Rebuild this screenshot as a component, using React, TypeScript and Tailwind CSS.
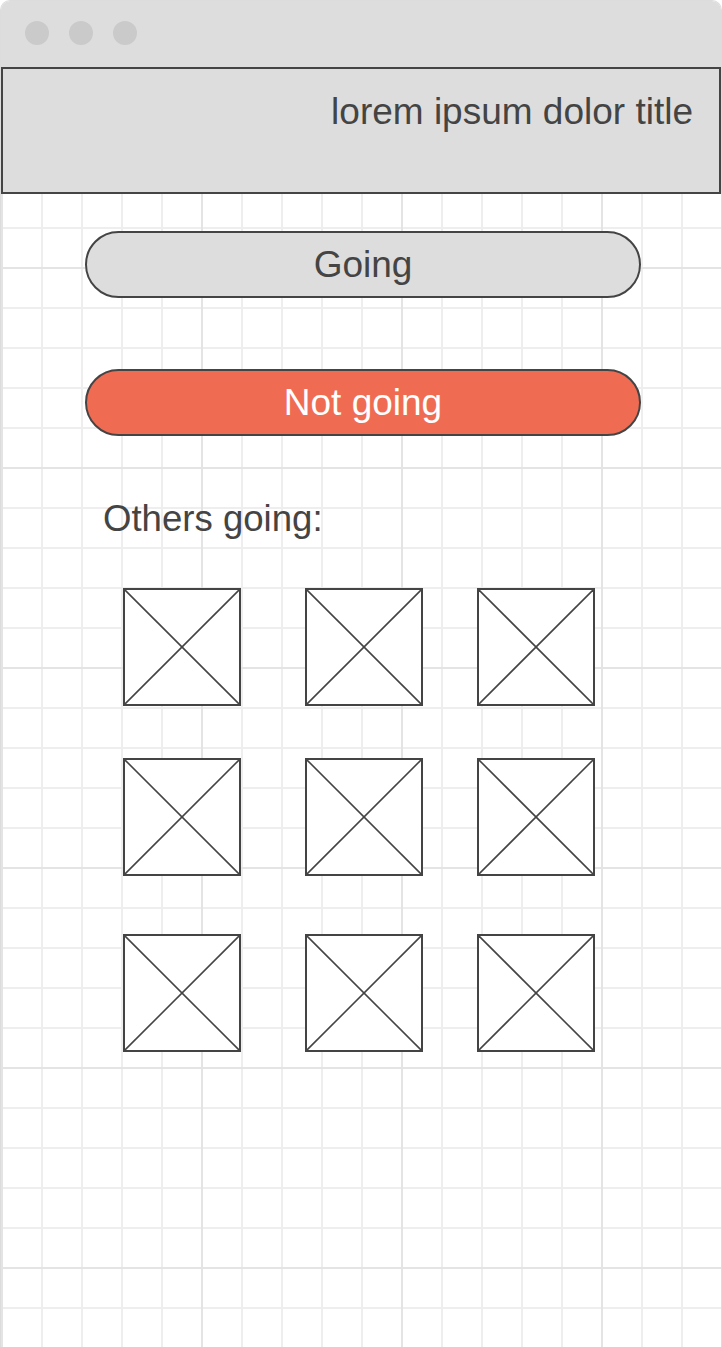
import React from "react";

const rows = [
  { top: "mt-[49px]" },
  { top: "mt-[52px]" },
  { top: "mt-[58px]" },
];

function Placeholder({ className }: { className: string }) {
  return (
    <div className={`h-[118px] w-[118px] shrink-0 border-2 border-[#444444] bg-white ${className}`}>
      <svg width="114" height="114" viewBox="0 0 114 114" className="block">
        <line x1="0" y1="0" x2="114" y2="114" stroke="#444444" strokeWidth="1.6" />
        <line x1="114" y1="0" x2="0" y2="114" stroke="#444444" strokeWidth="1.6" />
      </svg>
    </div>
  );
}

export default function App() {
  return (
    <div className="h-[1347px] w-[722px] overflow-hidden bg-white font-['Liberation_Sans',Arial,sans-serif] text-[#444444]">
      <div className="flex h-full flex-col rounded-t-[10px] border border-b-0 border-[#dcdcdc]">
        {/* window bar */}
        <div className="flex h-[66px] shrink-0 gap-[20px] rounded-t-[9px] bg-[#dddddd] pl-[24px] pt-[20px]">
          <div className="h-[24px] w-[24px] rounded-full bg-[#cacaca]" />
          <div className="h-[24px] w-[24px] rounded-full bg-[#cacaca]" />
          <div className="h-[24px] w-[24px] rounded-full bg-[#cacaca]" />
        </div>

        {/* page body with grid */}
        <div className="flex-1 bg-white bg-[linear-gradient(to_right,#e4e4e4_2px,transparent_2px),linear-gradient(to_bottom,#e4e4e4_2px,transparent_2px),linear-gradient(to_right,#eeeeee_2px,transparent_2px),linear-gradient(to_bottom,#eeeeee_2px,transparent_2px)] bg-[size:200px_200px,200px_200px,40px_40px,40px_40px] bg-[position:0px_0px,0px_0px,0px_0px,0px_0px]">
          <header className="h-[127px] border-2 border-[#444444] bg-[#dddddd] pr-[26px] pt-[23px] text-right text-[37px] leading-[40px]">
            lorem ipsum dolor title
          </header>

          <div className="flex flex-col pl-[84px]">
            <button className="mt-[37px] flex h-[67px] w-[556px] items-center justify-center rounded-full border-2 border-[#444444] bg-[#dddddd] text-[37px] leading-[40px] text-[#444444]">
              Going
            </button>
            <button className="mt-[71px] flex h-[67px] w-[556px] items-center justify-center rounded-full border-2 border-[#444444] bg-[#ef6c53] text-[37px] leading-[40px] text-white">
              Not going
            </button>
          </div>

          <p className="mt-[63px] pl-[102px] text-[36.6px] leading-[40px]">Others going:</p>

          {rows.map((r, i) => (
            <div key={i} className={`flex ${r.top}`}>
              <Placeholder className="ml-[122px]" />
              <Placeholder className="ml-[64px]" />
              <Placeholder className="ml-[54px]" />
            </div>
          ))}
        </div>
      </div>
    </div>
  );
}
